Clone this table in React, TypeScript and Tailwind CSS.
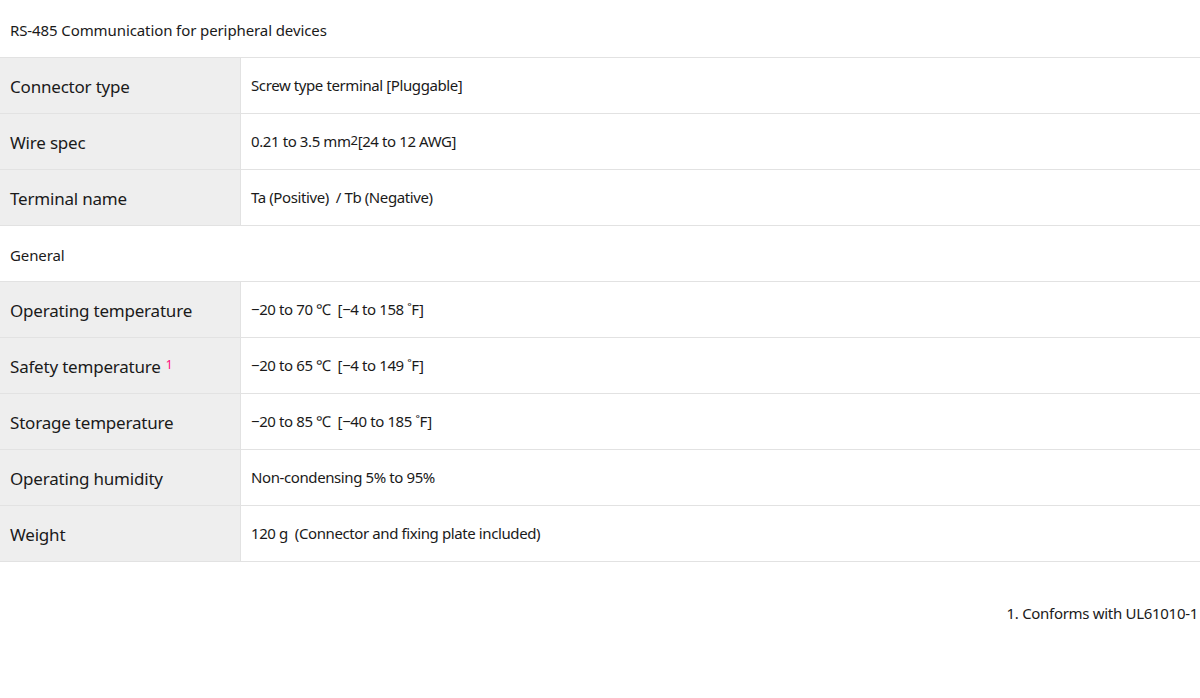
import React from 'react';

type Row =
  | { kind: 'section'; title: string; h: string }
  | { kind: 'spec'; label: React.ReactNode; value: React.ReactNode };

const ROWS: Row[] = [
  { kind: 'section', title: 'RS-485 Communication for peripheral devices', h: 'h-[58px]' },
  { kind: 'spec', label: 'Connector type', value: 'Screw type terminal [Pluggable]' },
  {
    kind: 'spec',
    label: 'Wire spec',
    value: (
      <>
        0.21 to 3.5 mm<sup className="text-[13px] relative -top-[2px]">2</sup>[24 to 12 AWG]
      </>
    ),
  },
  { kind: 'spec', label: 'Terminal name', value: 'Ta (Positive)  / Tb (Negative)' },
  { kind: 'section', title: 'General', h: 'h-[56px]' },
  { kind: 'spec', label: 'Operating temperature', value: '−20 to 70 ℃  [−4 to 158 ˚F]' },
  {
    kind: 'spec',
    label: (
      <>
        Safety temperature
        <sup className="ml-[5px] text-[12px] text-[#ff0a78] relative -top-[2px]">1</sup>
      </>
    ),
    value: '−20 to 65 ℃  [−4 to 149 ˚F]',
  },
  { kind: 'spec', label: 'Storage temperature', value: '−20 to 85 ℃  [−40 to 185 ˚F]' },
  { kind: 'spec', label: 'Operating humidity', value: 'Non-condensing 5% to 95%' },
  { kind: 'spec', label: 'Weight', value: '120 g  (Connector and fixing plate included)' },
];

export default function App() {
  return (
    <div className="w-[1200px] h-[698px] bg-white text-[#1a1a1a] font-['Noto_Sans',sans-serif] overflow-hidden">
      <div className="flex flex-col">
        {ROWS.map((row, i) =>
          row.kind === 'section' ? (
            <div key={i} className={`${row.h} border-b border-[#e2e2e2] flex items-center px-[10px] pt-[3px] text-[15px] tracking-[-0.1px]`}>
              {row.title}
            </div>
          ) : (
            <div key={i} className="h-[56px] border-b border-[#e2e2e2] flex">
              <div className="w-[241px] shrink-0 bg-[#eeeeee] border-r border-[#e2e2e2] flex items-center px-[10px] pt-[3px] text-[17px] tracking-[-0.2px]">
                {row.label}
              </div>
              <div className="flex-1 flex items-center px-[10px] text-[15px] tracking-[-0.4px] whitespace-pre">
                {row.value}
              </div>
            </div>
          )
        )}
      </div>
      <div className="flex justify-end pt-[40px] pr-[2px] text-[15px] tracking-[-0.3px]">1. Conforms with UL61010-1</div>
    </div>
  );
}
